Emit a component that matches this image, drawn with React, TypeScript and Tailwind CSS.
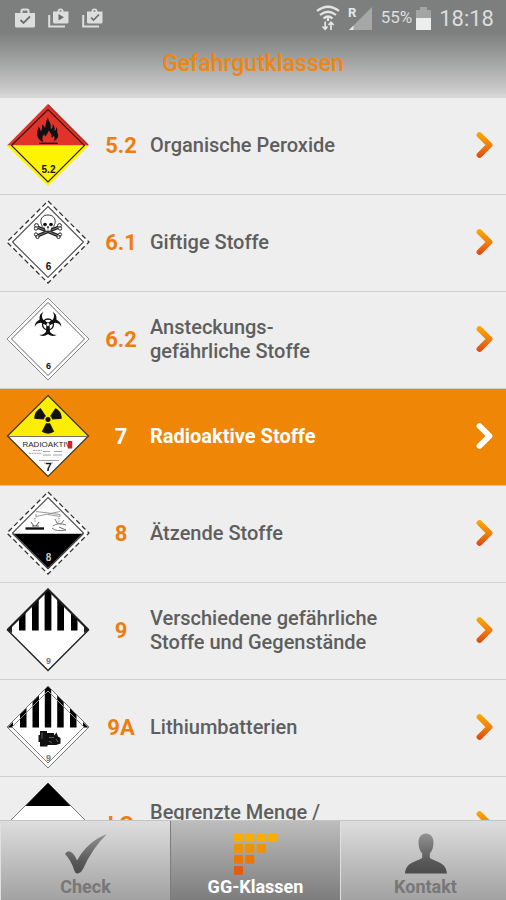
import { useState, type ReactNode } from 'react';
import clsx from 'clsx';

interface HazardClass {
  id: string;
  lines: string[];
  placard: ReactNode;
}

interface DiamondProps {
  r: number;
  fill?: string;
  stroke?: string;
  width?: number;
  dash?: string;
}

function Diamond({ r, fill = 'none', stroke = 'none', width = 1, dash }: DiamondProps) {
  return (
    <path
      d={`M42 ${42 - r}L${42 + r} 42L42 ${42 + r}L${42 - r} 42Z`}
      fill={fill}
      stroke={stroke}
      strokeWidth={width}
      strokeDasharray={dash}
    />
  );
}

function ClassDigit({ y, size = 10, fill = '#111', children }: { y: number; size?: number; fill?: string; children: string }) {
  return (
    <text x="42.5" y={y} fontSize={size} fontWeight="700" fill={fill} textAnchor="middle" fontFamily="Liberation Sans, sans-serif">
      {children}
    </text>
  );
}

function OrganicPeroxide() {
  return (
    <>
      <path d="M42 1L83 42.5H1Z" fill="#e2332a" />
      <path d="M1 42.5H83L42 83Z" fill="#fdf400" />
      <path d="M42 2L82 42" stroke="#b3261f" strokeWidth="1.5" fill="none" />
      <path d="M5.5 42.5L42 6.5L78.5 42.5L42 79Z" fill="none" stroke="#2a1a10" strokeWidth="1.1" />
      <path
        d="M36 38.5C32.5 36.5 30.5 33 31 29.5C31.3 27.5 32.5 26 32.3 23.5C34 25 34.5 27 34.8 28.5C36 26.5 36.5 24.5 35.8 21.5C38 22.5 38.7 24 39 25.5C40 22.5 39 19.5 42 14.5C42.2 18 44.8 19.5 44.8 22.5C44.8 24 44.5 25 45 26C46.5 25 47 23.5 46.5 21C48.5 22.5 49 25 48.7 28C50 27.2 50.4 26 50.3 24C52.3 26.5 50.5 28.5 51.8 30.5C53 34 50.5 37 47.5 38.5C48.7 36.5 49 34.5 47.8 32.5C47.2 34 46.5 34.5 45.5 34.5C46 31.5 44.5 29.5 42.5 27.5C42.5 30 40.5 31 39.8 33.5C38.8 33 38.4 32 38.3 31C36.5 33.5 35.5 36 37.5 38.7Z"
        fill="#111"
      />
      <path d="M33 40.3H51.5" stroke="#111" strokeWidth="1.3" />
      <ClassDigit y={70}>5.2</ClassDigit>
    </>
  );
}

function Toxic() {
  return (
    <>
      <Diamond r={41} fill="#fff" stroke="#333" dash="5 3" width={1.3} />
      <Diamond r={35.5} stroke="#555" width={1.2} />
      <path d="M31 27L53 36M53 27L31 36" stroke="#111" strokeWidth="3.2" strokeLinecap="round" />
      <g fill="#fff" stroke="#222" strokeWidth="1">
        <circle cx="30.5" cy="25.5" r="1.9" />
        <circle cx="30" cy="28.5" r="1.7" />
        <circle cx="53.5" cy="25.5" r="1.9" />
        <circle cx="54" cy="28.5" r="1.7" />
        <circle cx="30" cy="34.5" r="1.6" />
        <circle cx="31.5" cy="37" r="1.6" />
        <circle cx="54" cy="34.5" r="1.6" />
        <circle cx="52.5" cy="37" r="1.6" />
      </g>
      <path d="M31 27L53 36M53 27L31 36" stroke="#aaa" strokeWidth="0.8" />
      <path
        d="M42 15C37.5 15 34.8 17.8 34.8 21.5C34.8 23.5 35.5 24.5 36 25.5C36 27 36.5 28 38.5 28V31.5H45.5V28C47.5 28 48 27 48 25.5C48.5 24.5 49.2 23.5 49.2 21.5C49.2 17.8 46.5 15 42 15Z"
        fill="#fff"
        stroke="#333"
        strokeWidth="1"
      />
      <ellipse cx="39" cy="24.5" rx="1.9" ry="1.7" fill="#111" />
      <ellipse cx="45" cy="24.5" rx="1.9" ry="1.7" fill="#111" />
      <path d="M42 26L41.2 28H42.8ZM39.5 29.5V31M41.2 29.5V31M42.8 29.5V31M44.5 29.5V31" fill="#111" stroke="#333" strokeWidth="0.7" />
      <ClassDigit y={70}>6</ClassDigit>
    </>
  );
}

const prong =
  'M42 25.5C38.5 25 36 22.3 36 19C36 17.3 36.6 16 37.5 14.8C34.3 16.5 33.3 19 33.5 22C33.8 25 37 27.5 41 28H43C47 27.5 50.2 25 50.5 22C50.7 19 49.7 16.5 46.5 14.8C47.4 16 48 17.3 48 19C48 22.3 45.5 25 42 25.5Z';

function Infectious() {
  return (
    <>
      <Diamond r={41} fill="#fff" stroke="#888" />
      <Diamond r={36.5} stroke="#666" />
      <g fill="#111">
        <path d={prong} />
        <path d={prong} transform="rotate(120 42 27.5)" />
        <path d={prong} transform="rotate(240 42 27.5)" />
      </g>
      <circle cx="42" cy="27.5" r="5.5" fill="none" stroke="#111" strokeWidth="1.3" />
      <circle cx="42" cy="27.5" r="1.5" fill="#fff" />
      <ClassDigit y={72} size={9}>6</ClassDigit>
    </>
  );
}

function Radioactive() {
  const blade = 'M40.3 29.5L36.3 37.5Q42 41 47.7 37.5L43.7 29.5Q42 30.3 40.3 29.5Z';
  return (
    <>
      <Diamond r={40.5} fill="#fff" />
      <path d="M42 1.5L82.5 42.5H1.5Z" fill="#fbee00" />
      <Diamond r={40.5} stroke="#3a3520" width={1.2} />
      <path d="M2 42.5H82" stroke="#555" strokeWidth="0.8" />
      <g fill="#111" stroke="#111" strokeWidth="0.8">
        <path d={blade} />
        <path d={blade} transform="rotate(120 42 25.5)" />
        <path d={blade} transform="rotate(240 42 25.5)" />
        <circle cx="42" cy="25.5" r="2.2" />
      </g>
      <text x="16.5" y="52.5" fontSize="8" fill="#222" fontFamily="Liberation Sans, sans-serif">
        RADIOAKTIV
      </text>
      <rect x="61.8" y="47" width="4.4" height="7.5" fill="#e01b24" />
      <g stroke="#888" strokeWidth="0.8">
        <path d="M27 56.5H36M23 59.3H36" strokeDasharray="2 0.6" />
        <path d="M37 57.5H44M48 57.5H56M37 61H45M47 61H56" />
        <path d="M33 66.5H53M38 69H47" />
      </g>
      <ClassDigit y={77} size={11}>7</ClassDigit>
    </>
  );
}

function Corrosive() {
  return (
    <>
      <Diamond r={41} fill="#fff" stroke="#333" dash="5 3" width={1.3} />
      <path d="M6 42.7H78L42 78.5Z" fill="#000" />
      <Diamond r={35.5} stroke="#555" width={1.2} />
      <g fill="none" stroke="#999" strokeWidth="1">
        <path d="M30 20.5L54 23.5V25.5L42 23.5M30 25.5L42 23L54 20.5M30 23V26.5" />
        <path d="M29 27V32M53 27V31" strokeDasharray="1.5 1" />
        <path d="M25 31L28 35M33 31L30 35M26 35H33" stroke="#555" />
        <path d="M49 28L51 32L55 33L58 29M47 35Q52 31 60 34M46 37Q50 41 60 39L53 36" stroke="#777" />
      </g>
      <path d="M19.5 37.5H38" stroke="#111" strokeWidth="2.4" />
      <ClassDigit y={70} fill="#ccc">8</ClassDigit>
    </>
  );
}

function Miscellaneous() {
  return (
    <>
      <Diamond r={40.5} fill="#fff" />
      <path
        d="M13 30.5L19.5 24V42.5H13ZM26 17.5L32.7 11V42.5H26ZM38.6 4.5L42 1.5L45.4 4.5V42.5H38.6ZM51.3 11L58 17.5V42.5H51.3ZM65 24L71.5 30.5V42.5H65Z"
        fill="#000"
      />
      <path d="M1.5 42.5L6 38V45ZM82.5 42.5L78 38V45Z" fill="#222" />
      <path d="M1.5 42L42 1.5L82.5 42" fill="none" stroke="#111" strokeWidth="2" />
      <Diamond r={40.5} stroke="#222" width={1.4} />
      <ClassDigit y={76} size={9} fill="#777">9</ClassDigit>
    </>
  );
}

function Lithium() {
  return (
    <>
      <Diamond r={41} fill="#fff" />
      <path
        d="M14 29.5L20.5 23V42.5H14ZM26.5 17L33 10.5V42.5H26.5ZM38.8 4.5L42 1.5L45.2 4.5V42.5H38.8ZM51.2 10.5L57.7 17V42.5H51.2ZM64 23L70.5 29.5V42.5H64Z"
        fill="#000"
      />
      <path d="M1.5 42.5L7 37V42.5ZM82.5 42.5L77 37V42.5Z" fill="#000" />
      <Diamond r={41} stroke="#777" />
      <Diamond r={36} stroke="#888" />
      <path d="M32.5 50H34V46H41V48H48V50.5L50.5 47.5L52 51.5L54.5 53V58.5L50 60H41.5V61.5H34V57H32.5Z" fill="#111" />
      <path d="M36 47.5V54M43 52.5H48M43 56L46 58M50 54L52 57" stroke="#777" strokeWidth="0.8" />
      <ClassDigit y={76} size={9} fill="#777">9</ClassDigit>
    </>
  );
}

function LimitedQuantity() {
  return (
    <>
      <Diamond r={41} fill="#fff" stroke="#777" />
      <path d="M42 1L64.5 24H19.5Z" fill="#000" />
      <path d="M42 83L64.5 60H19.5Z" fill="#000" />
    </>
  );
}

const classes: HazardClass[] = [
  { id: '5.2', lines: ['Organische Peroxide'], placard: <OrganicPeroxide /> },
  { id: '6.1', lines: ['Giftige Stoffe'], placard: <Toxic /> },
  { id: '6.2', lines: ['Ansteckungs-', 'gefährliche Stoffe'], placard: <Infectious /> },
  { id: '7', lines: ['Radioaktive Stoffe'], placard: <Radioactive /> },
  { id: '8', lines: ['Ätzende Stoffe'], placard: <Corrosive /> },
  { id: '9', lines: ['Verschiedene gefährliche', 'Stoffe und Gegenstände'], placard: <Miscellaneous /> },
  { id: '9A', lines: ['Lithiumbatterien'], placard: <Lithium /> },
  { id: 'LQ', lines: ['Begrenzte Menge /', 'Limited Quantity'], placard: <LimitedQuantity /> },
];

function Bag({ stacked, play }: { stacked?: boolean; play?: boolean }) {
  return (
    <svg viewBox="0 0 22 20" className="h-5 w-[22px]" fill="none">
      {stacked ? (
        <>
          <path d="M1.2 7V18.5H17" stroke="#dcdedd" strokeWidth="2" />
          <path d="M5 3.5H9.5Q9.5 0.5 12.5 0.5T15.5 3.5H20.5V14Q20.5 15.5 19 15.5H6.5Q5 15.5 5 14Z" fill="#dcdedd" />
          <path d="M11.2 3.5Q11.2 2 12.5 2T13.8 3.5" fill="#7e807f" />
          {play ? (
            <path d="M10.5 6V12.5L16 9.2Z" fill="#6c6e6d" />
          ) : (
            <path d="M9 9.5L11.5 12L17 6.5" stroke="#6c6e6d" strokeWidth="1.7" />
          )}
        </>
      ) : (
        <>
          <path d="M1 5H6.5V3Q6.5 0.5 9 0.5H13Q15.5 0.5 15.5 3V5H21V18Q21 19.5 19.5 19.5H2.5Q1 19.5 1 18Z" fill="#dcdedd" />
          <path d="M8.5 5V3.5Q8.5 2.5 9.5 2.5H12.5Q13.5 2.5 13.5 3.5V5Z" fill="#7e807f" />
          <path d="M6.5 12L9.5 15L16 8.5" stroke="#6c6e6d" strokeWidth="1.8" />
        </>
      )}
    </svg>
  );
}

function StatusBar() {
  return (
    <div className="flex h-9 items-center justify-between pr-3 pl-[14px] text-[#dcdedd]">
      <div className="flex items-center gap-3">
        <Bag />
        <Bag stacked play />
        <Bag stacked />
      </div>
      <div className="flex items-center">
        <svg viewBox="0 0 24 26" className="mr-2 h-[26px] w-6" fill="none" stroke="#e4e6e5" strokeWidth="2.2">
          <path d="M1 6Q12 -2.5 23 6M4 10Q12 3.5 20 10M7.5 13.5Q12 9.5 16.5 13.5" />
          <path d="M12 13V16" />
          <path d="M9.2 16.5V24M6.5 21.5L9.2 24.3L11.5 21.5M15 25V18M12.5 20L15 17.3L17.7 20" strokeWidth="1.7" />
        </svg>
        <svg viewBox="0 0 25 25" className="mr-2 h-[25px] w-[25px]">
          <path d="M24 1V24H1Z" fill="#a6a8a7" />
          <path d="M5.5 19.5V24H1Z" fill="#e6e8e7" />
          <text x="0" y="11" fontSize="13" fontWeight="700" fill="#e6e8e7" fontFamily="Roboto, sans-serif">
            R
          </text>
        </svg>
        <span className="mr-1 text-[17px]">55%</span>
        <svg viewBox="0 0 15 23" className="mr-2 h-[23px] w-[15px]">
          <path d="M0 3H4V0H11V3H15V11H0Z" fill="#a3a5a4" />
          <path d="M0 11H15V23H0Z" fill="#eceeed" />
        </svg>
        <span className="text-[22px]">18:18</span>
      </div>
    </div>
  );
}

function Chevron({ active }: { active: boolean }) {
  return (
    <svg viewBox="0 0 18 28" className="h-7 w-[18px] shrink-0" fill="none">
      <path d="M3.5 4L13.5 14L3.5 24" stroke={active ? '#fff' : 'url(#flare)'} strokeWidth="5.8" strokeLinejoin="round" strokeLinecap="round" />
    </svg>
  );
}

function CheckIcon() {
  return (
    <svg viewBox="0 0 44 42" className="h-[42px] w-11">
      <path d="M1 21Q3 17.5 6 18.5Q10 20 13 27.5Q24 8 43 1Q29 14 19 36Q17.5 39.5 14 40.5Q11.5 41 10.5 38Q7 27 1 21Z" fill="url(#tabIcon)" />
    </svg>
  );
}

function GridIcon() {
  const colors = ['#f9ad00', '#f39200', '#ef7700', '#e85a0c'];
  return (
    <svg viewBox="0 0 44 42" className="h-[42px] w-11">
      {colors.map((color, row) =>
        Array.from({ length: 4 - row }, (_, col) => (
          <rect key={`${row}-${col}`} x={col * 11.3} y={row * 11} width="9" height="8.7" rx="0.7" fill={color} />
        )),
      )}
    </svg>
  );
}

function PersonIcon() {
  return (
    <svg viewBox="0 0 44 42" className="h-[42px] w-11">
      <path
        d="M22 0.5C26.5 0.5 29.5 4 29.5 9.5C29.5 14.5 28 18 25.8 20.5V24.5C28 28.5 42 27.5 43 40.5H1C2 27.5 16 28.5 18.2 24.5V20.5C16 18 14.5 14.5 14.5 9.5C14.5 4 17.5 0.5 22 0.5Z"
        fill="url(#tabIcon)"
      />
    </svg>
  );
}

const tabs = [
  { label: 'Check', icon: <CheckIcon /> },
  { label: 'GG-Klassen', icon: <GridIcon /> },
  { label: 'Kontakt', icon: <PersonIcon /> },
];

export default function App() {
  const [selected, setSelected] = useState('7');
  const [tab, setTab] = useState('GG-Klassen');

  return (
    <div className="flex h-screen flex-col overflow-hidden bg-[#eeeeee] font-['Roboto',sans-serif]">
      {/* Shared gradients */}
      <svg className="absolute h-0 w-0" aria-hidden="true">
        <defs>
          <linearGradient id="flare" gradientUnits="userSpaceOnUse" x1="0" y1="2" x2="0" y2="26">
            <stop offset="0" stopColor="#f9a800" />
            <stop offset="0.55" stopColor="#ef7d0c" />
            <stop offset="1" stopColor="#e2490f" />
          </linearGradient>
          <linearGradient id="tabIcon" x1="0" y1="0" x2="0" y2="1">
            <stop offset="0" stopColor="#929292" />
            <stop offset="0.7" stopColor="#585858" />
            <stop offset="1" stopColor="#4c4c4c" />
          </linearGradient>
        </defs>
      </svg>

      <header className="shrink-0 border-b-4 border-[#d5d6d5] bg-linear-to-b from-[#7d7f7e] from-35% to-[#cfd0cf]">
        <StatusBar />
        <h1 className="pt-[14px] pb-4 text-center text-[23px] leading-7 font-medium text-[#f08510]">Gefahrgutklassen</h1>
      </header>

      <main className="min-h-0 flex-1 overflow-y-auto [scrollbar-width:none]">
        <ul>
          {classes.map(({ id, lines, placard }) => {
            const active = id === selected;
            return (
              <li key={id}>
                <button
                  onClick={() => setSelected(id)}
                  className={clsx(
                    'flex min-h-[97px] w-full items-center border-b pr-3 pb-0.5 pl-[6px] text-left',
                    active ? 'border-[#e8b9a0] bg-[#f08605] text-white' : 'border-[#cfcfcf] text-[#5e5e5e]',
                  )}
                >
                  <svg viewBox="0 0 84 84" className="h-[84px] w-[84px] shrink-0" aria-hidden="true">
                    {placard}
                  </svg>
                  <span className={clsx('w-[60px] pl-0.5 text-center text-[22px] font-bold', !active && 'text-[#ee7d11]')}>{id}</span>
                  <span className={clsx('flex-1 text-xl leading-6', active ? 'font-bold' : 'font-medium')}>
                    {lines.map((line) => (
                      <span key={line} className="block">
                        {line}
                      </span>
                    ))}
                  </span>
                  <Chevron active={active} />
                </button>
              </li>
            );
          })}
        </ul>
      </main>

      <nav className="-mr-1 flex shrink-0 border-t border-[#c4c4c4]">
        {tabs.map(({ label, icon }) => {
          const active = label === tab;
          return (
            <button
              key={label}
              onClick={() => setTab(label)}
              className={clsx(
                'flex flex-1 flex-col items-center border-l bg-linear-to-b pt-3 pb-px text-lg leading-6 font-bold',
                active ? 'border-[#7c7c7c] from-[#bdbdbd] to-[#7d7d7d] text-white' : 'border-[#e0e0e0] from-[#dedede] to-[#a2a2a2] text-[#777777]',
              )}
            >
              {icon}
              {label}
            </button>
          );
        })}
      </nav>
    </div>
  );
}
